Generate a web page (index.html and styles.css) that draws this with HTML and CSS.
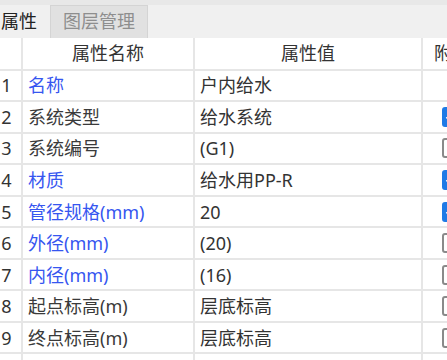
FILE: index.html
```html
<!DOCTYPE html>
<html>
<head>
    <meta charset="utf-8">
    <title>属性</title>
    <link rel="stylesheet" href="styles.css">
</head>
<body>
    <div class="panel">
        <div class="tabs">
            <div class="tab active">属性</div>
            <div class="tab">图层管理</div>
        </div>
        <table class="props">
            <colgroup>
                <col class="c-no">
                <col class="c-name">
                <col class="c-value">
                <col class="c-extra">
            </colgroup>
            <tr class="head">
                <td></td>
                <td>属性名称</td>
                <td>属性值</td>
                <td class="extra">附加</td>
            </tr>
            <tr>
                <td class="no">1</td>
                <td class="name blue">名称</td>
                <td class="value">户内给水</td>
                <td class="chk"></td>
            </tr>
            <tr>
                <td class="no">2</td>
                <td class="name">系统类型</td>
                <td class="value">给水系统</td>
                <td class="chk"><span class="box on"></span></td>
            </tr>
            <tr>
                <td class="no">3</td>
                <td class="name">系统编号</td>
                <td class="value">(G1)</td>
                <td class="chk"><span class="box"></span></td>
            </tr>
            <tr>
                <td class="no">4</td>
                <td class="name blue">材质</td>
                <td class="value">给水用PP-R</td>
                <td class="chk"><span class="box on"></span></td>
            </tr>
            <tr>
                <td class="no">5</td>
                <td class="name blue">管径规格(mm)</td>
                <td class="value">20</td>
                <td class="chk"><span class="box on"></span></td>
            </tr>
            <tr>
                <td class="no">6</td>
                <td class="name blue">外径(mm)</td>
                <td class="value">(20)</td>
                <td class="chk"><span class="box"></span></td>
            </tr>
            <tr>
                <td class="no">7</td>
                <td class="name blue">内径(mm)</td>
                <td class="value">(16)</td>
                <td class="chk"><span class="box"></span></td>
            </tr>
            <tr>
                <td class="no">8</td>
                <td class="name">起点标高(m)</td>
                <td class="value">层底标高</td>
                <td class="chk"><span class="box"></span></td>
            </tr>
            <tr>
                <td class="no">9</td>
                <td class="name">终点标高(m)</td>
                <td class="value">层底标高</td>
                <td class="chk"><span class="box"></span></td>
            </tr>
            <tr>
                <td class="no"></td>
                <td class="name"></td>
                <td class="value"></td>
                <td class="chk"></td>
            </tr>
        </table>
    </div>
</body>
</html>
```

FILE: styles.css
```css
* {
    box-sizing: border-box;
}

body {
    margin: 0;
    background-color: #ffffff;
    font-family: "Noto Sans", "Noto Sans CJK SC", sans-serif;
    font-size: 18px;
    color: #333333;
    overflow: hidden;
}

.panel {
    width: 447px;
    height: 360px;
    overflow: hidden;
    background-color: #ffffff;
}

.tabs {
    display: flex;
    height: 38px;
    padding-top: 5px;
    margin-left: -12px;
    background-color: #f0f0f0;
    border-top: 5px solid #e8e8e8;
    padding-top: 0;
}

.tab {
    height: 33px;
    line-height: 31px;
    padding: 0 12px;
    color: #8e8e8e;
    background-color: #e1e1e1;
    border: 1px solid #d4d4d4;
    border-bottom: none;
}

.tab.active {
    color: #222222;
    background-color: #f0f0f0;
    border-color: transparent;
}

.props {
    border-collapse: collapse;
    table-layout: fixed;
    width: 520px;
    margin-left: -10px;
}

.c-no {
    width: 31px;
}

.c-name {
    width: 172px;
}

.c-value {
    width: 228px;
}

.c-extra {
    width: 89px;
}

.props td {
    height: 31.55px;
    padding: 0 5px;
    border: 2px solid #e6e6e6;
    white-space: nowrap;
    overflow: hidden;
    line-height: 1;
}

.props tr:first-child td {
    border-top: none;
}

.head td {
    text-align: center;
    color: #333333;
}

.head td.extra {
    text-align: left;
    padding-left: 11px;
}

.props td.no {
    text-align: center;
    padding: 0;
    color: #333333;
}

.name {
    color: #3a3a3a;
}

.name.blue {
    color: #3656f0;
}

.value {
    color: #333333;
}

.props td.chk {
    padding-left: 19px;
}

.box {
    display: block;
    width: 20px;
    height: 20px;
    border: 2px solid #8a8a8a;
    border-radius: 3px;
    background-color: #ffffff;
}

.box.on {
    border-color: #1f7ae6;
    background-color: #1f7ae6;
    position: relative;
}

.box.on::after {
    content: "";
    position: absolute;
    left: 5px;
    top: 1px;
    width: 5px;
    height: 10px;
    border: solid #ffffff;
    border-width: 0 2px 2px 0;
    transform: rotate(45deg);
}
```
